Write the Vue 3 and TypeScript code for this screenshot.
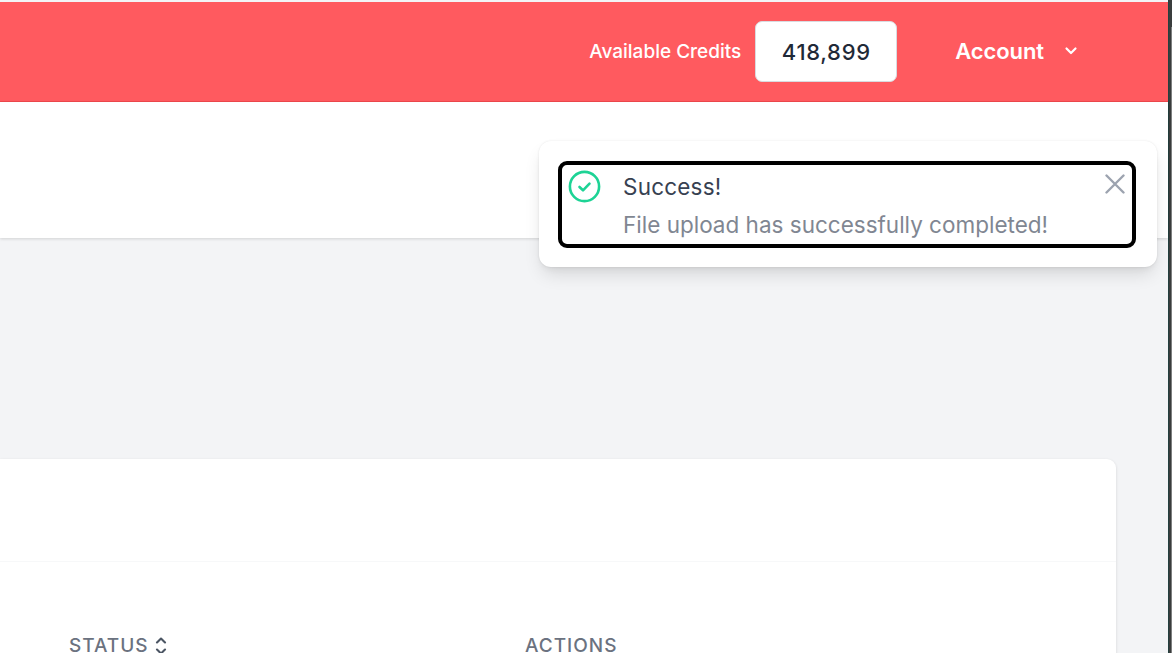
<script setup lang="ts">
const credits: string = '418,899'
</script>

<template>
  <div class="window">
    <div class="page">
      <header class="topbar">
        <span class="credits-label">Available Credits</span>
        <span class="credits-box">{{ credits }}</span>
        <button class="account" type="button">
          <span>Account</span>
          <svg width="16" height="16" viewBox="0 0 16 16" fill="none" aria-hidden="true">
            <path d="M3.5 5.5 8 10l4.5-4.5" stroke="#fff" stroke-width="2.2" stroke-linecap="round" stroke-linejoin="round" />
          </svg>
        </button>
      </header>
      <div class="subbar"></div>
      <main class="content">
        <section class="card">
          <div class="card-head"></div>
          <div class="table-head">
            <div class="col-status">
              <span>STATUS</span>
              <svg width="12" height="18" viewBox="0 0 12 18" fill="none" aria-hidden="true">
                <path d="M2 5.5 6 1.5l4 4M2 12.5l4 4 4-4" stroke="#4b5563" stroke-width="2.1" stroke-linecap="round" stroke-linejoin="round" />
              </svg>
            </div>
            <div class="col-actions">ACTIONS</div>
          </div>
        </section>
      </main>
      <div class="toast">
        <div class="toast-inner">
          <svg class="ok" width="33" height="33" viewBox="0 0 33 33" fill="none" aria-hidden="true">
            <circle cx="16.5" cy="16.5" r="14.6" stroke="#1dd395" stroke-width="2.6" />
            <path d="M11.5 17 15 20.3 21.5 13.6" stroke="#1dd395" stroke-width="2.6" stroke-linecap="round" stroke-linejoin="round" />
          </svg>
          <div class="toast-text">
            <div class="toast-title">Success!</div>
            <div class="toast-msg">File upload has successfully completed!</div>
          </div>
          <svg class="close" width="20" height="20" viewBox="0 0 20 20" fill="none" aria-hidden="true">
            <path d="M1.5 1.5 18.5 18.5M18.5 1.5 1.5 18.5" stroke="#9ca3af" stroke-width="2.4" stroke-linecap="round" />
          </svg>
        </div>
      </div>
    </div>
    <div class="edge"><div class="edge-thumb"></div></div>
  </div>
</template>

<style>
html, body { margin: 0; overflow: hidden; }
</style>

<style scoped>
.window {
  display: flex;
  width: 1172px;
  height: 653px;
  overflow: hidden;
  font-family: Inter, "Liberation Sans", sans-serif;
}
.page {
  position: relative;
  flex: 1;
  min-width: 0;
  display: flex;
  flex-direction: column;
  padding-top: 2px;
  background: #f3f4f6;
  box-sizing: border-box;
}
.edge {
  width: 4px;
  box-sizing: border-box;
  padding: 27px 0 0 2px;
  background: #3a3d3d;
  border-left: 1px solid #24403f;
}
.edge-thumb {
  height: 100%;
  background: #7d7f7f;
}
.topbar {
  height: 100px;
  box-sizing: border-box;
  display: flex;
  align-items: center;
  justify-content: flex-end;
  padding: 0 89px 0 0;
  background: #ff5a5f;
  border-bottom: 1px solid #f0484d;
  color: #fff;
}
.credits-label {
  font-size: 19px;
  font-weight: 500;
}
.credits-box {
  width: 142px;
  height: 61px;
  margin-left: 14px;
  display: flex;
  align-items: center;
  justify-content: center;
  background: #fff;
  border: 1px solid #d9dbe0;
  border-radius: 7px;
  box-sizing: border-box;
  color: #1f2937;
  font-size: 22px;
  font-weight: 500;
  letter-spacing: 0.7px;
}
.account {
  display: flex;
  align-items: center;
  gap: 19px;
  margin-left: 58px;
  padding: 0 0 1px;
  border: 0;
  background: none;
  color: #fff;
  font: inherit;
  font-size: 22px;
  font-weight: 600;
  letter-spacing: -0.1px;
}
.subbar {
  height: 136px;
  background: #fff;
  box-shadow: 0 1px 3px rgba(0, 0, 0, 0.14);
}
.content {
  flex: 1;
  min-height: 0;
  padding: 221px 52px 0 0;
}
.card {
  height: 300px;
  background: #fff;
  border-radius: 0 9px 0 0;
  box-shadow: 0 1px 3px rgba(0, 0, 0, 0.14);
}
.card-head {
  height: 102px;
  border-bottom: 1px solid #f7f8f9;
}
.table-head {
  display: flex;
  padding: 72px 0 0 69px;
  color: #6b7280;
  font-size: 19px;
  font-weight: 500;
  letter-spacing: 1px;
  line-height: 24px;
}
.col-status {
  width: 456px;
  display: flex;
  align-items: center;
  gap: 6px;
}
.toast {
  position: absolute;
  top: 141px;
  left: 539px;
  width: 618px;
  height: 126px;
  box-sizing: border-box;
  padding: 20px 21px 19px 19px;
  background: #fff;
  border-radius: 12px;
  box-shadow: 0 0 2px rgba(0, 0, 0, 0.1), 0 10px 18px -3px rgba(0, 0, 0, 0.12), 0 4px 6px -2px rgba(0, 0, 0, 0.06);
}
.toast-inner {
  position: relative;
  height: 100%;
  box-sizing: border-box;
  display: flex;
  align-items: flex-start;
  border: 4px solid #000;
  border-radius: 9px;
  padding: 5px 0 0 6px;
}
.ok {
  flex: none;
}
.toast-text {
  margin-left: 22px;
  flex: 1;
  font-size: 22.5px;
}
.toast-title {
  color: #374151;
  line-height: 28px;
  margin-top: 3px;
  letter-spacing: 0.2px;
}
.toast-msg {
  margin-top: 10px;
  color: #6b7280;
  line-height: 28px;
  opacity: 0.85;
}
.close {
  margin: 4px 7px 0 0;
  flex: none;
}
</style>
